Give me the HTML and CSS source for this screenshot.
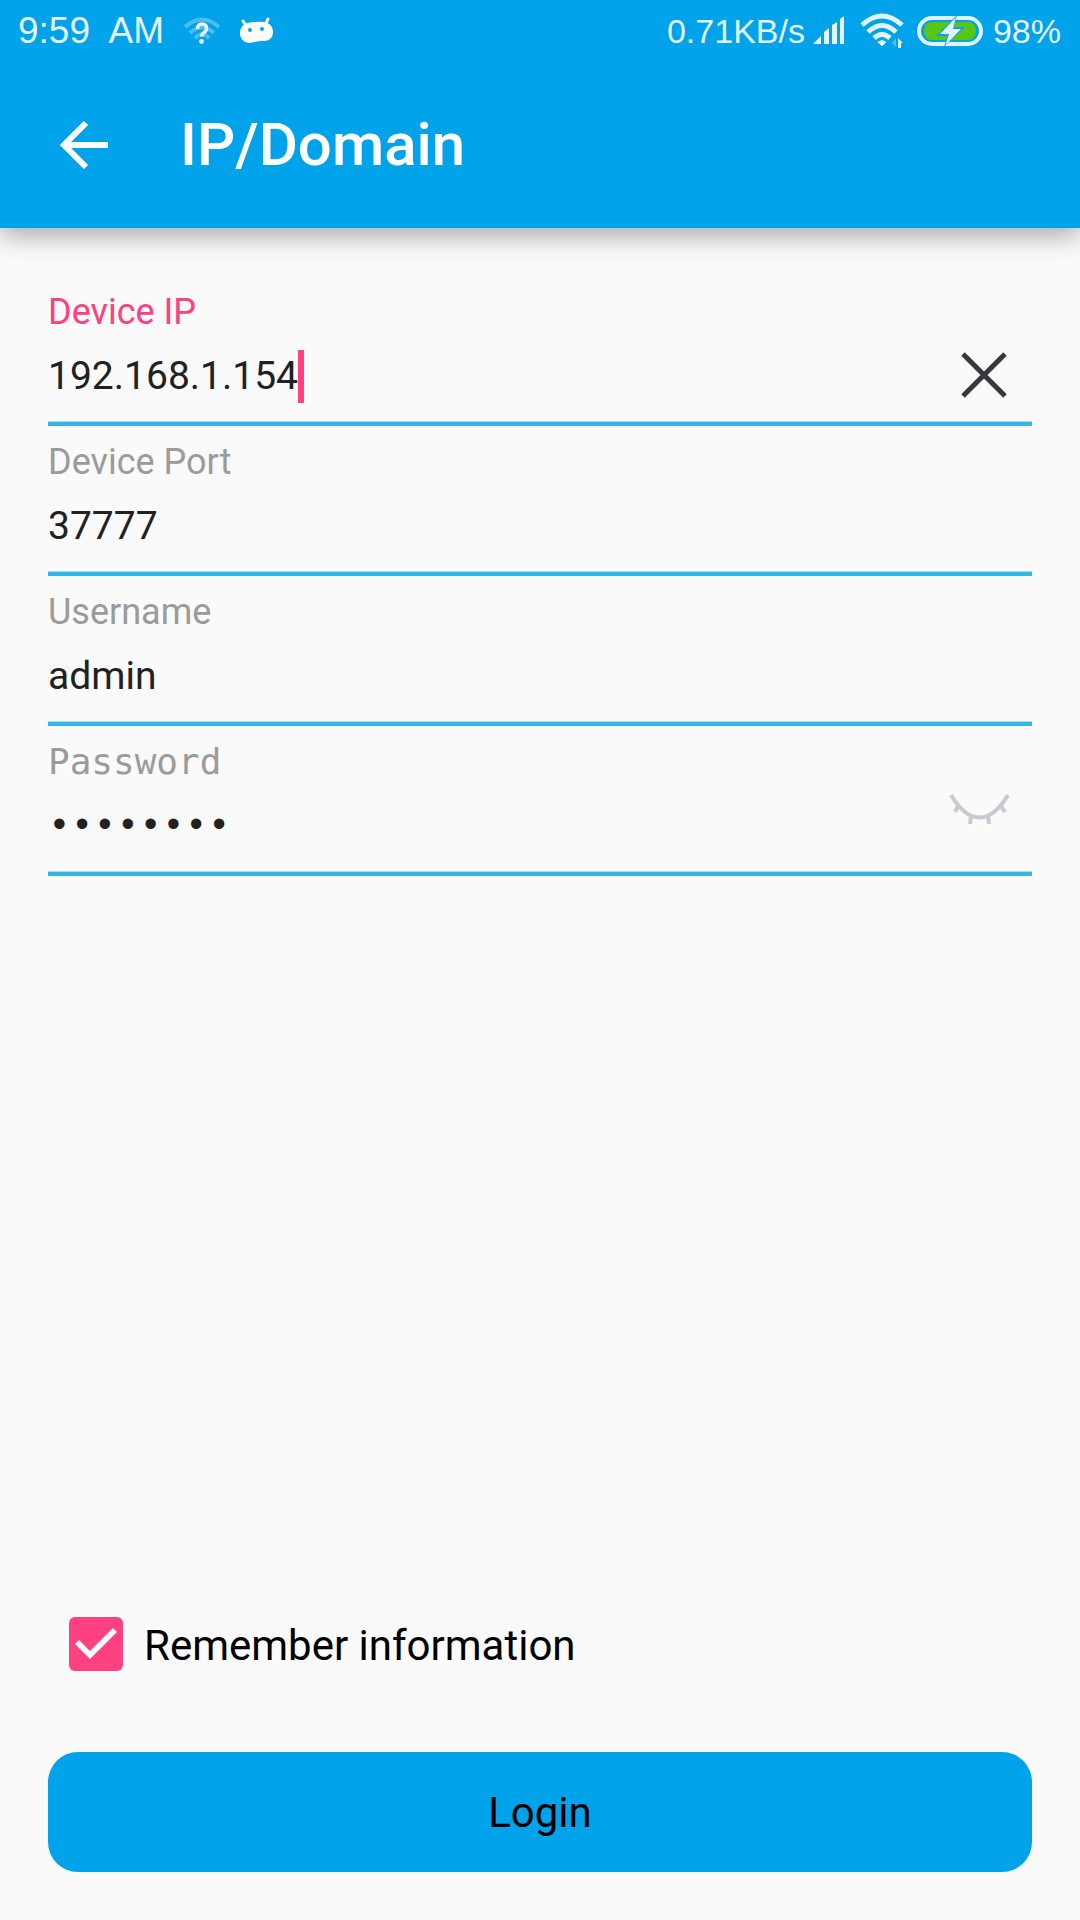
FILE: index.html
```html
<!DOCTYPE html>
<html lang="en">
<head>
<meta charset="utf-8">
<meta name="viewport" content="width=device-width, initial-scale=1">
<title>IP/Domain</title>
<link rel="stylesheet" href="styles.css">
</head>
<body>
<header class="header">
  <div class="status">
    <div class="status-left">
      <span class="clock">9:59&nbsp; AM</span>
      <svg class="wifi-unknown" width="36" height="30" viewBox="0 0 36 30" aria-hidden="true">
        <g fill="none" stroke="#4dbdf0" stroke-width="4">
          <path d="M1 11Q18 -4 35 11"/><path d="M6 17Q18 6 30 17"/><path d="M11 22Q18 15 25 22"/>
        </g>
        <path d="M13.500 13Q13.500 8 18 8T22.500 12.500Q22.500 15 20 16.500T18 20.500" fill="none" stroke="#eaf7fe" stroke-width="3.500"/>
        <circle cx="17.500" cy="25.500" r="2.400" fill="#eaf7fe"/>
      </svg>
      <svg class="robot" width="36" height="30" viewBox="0 0 36 30" aria-hidden="true">
        <path d="M4 5l4 6M29 3l-3 6" stroke="#fff" stroke-width="3" stroke-linecap="round"/>
        <path d="M1 17C1 8 9 6 17 6C26 5 34 7 34 16C34 22 30 25 25 25C20 25 16 26 11 27C5 27 1 23 1 17Z" fill="#fff"/>
        <circle cx="11" cy="14" r="2" fill="#00a2e9"/><circle cx="23" cy="13" r="2" fill="#00a2e9"/>
      </svg>
    </div>
    <div class="status-right">
      <span class="rate">0.71KB/s</span>
      <svg class="signal" width="32" height="30" viewBox="0 0 32 30" aria-hidden="true">
        <path d="M0 28L8 20V28ZM11 28V16L16 12V28ZM19 28V9L24 6V28ZM27 28V3L31 0V28Z" fill="#e2f4fd"/>
      </svg>
      <svg class="wifi" width="44" height="36" viewBox="0 0 44 36" aria-hidden="true">
        <g fill="none" stroke="#e2f4fd" stroke-width="5">
          <path d="M2 12Q22 -6 42 12"/><path d="M8 19Q22 6 36 19"/><path d="M14 25Q22 18 30 25"/>
        </g>
        <path d="M18 29Q22 26 26 29L22 33Z" fill="#e2f4fd" stroke="#e2f4fd"/>
        <path d="M36 25V34L32 30" fill="#4fbdf0"/><path d="M38 35V25L43 30H41V35Z" fill="#e2f4fd"/>
      </svg>
      <svg class="battery" width="66" height="32" viewBox="0 0 66 32" aria-hidden="true">
        <rect x="2" y="3" width="62" height="26" rx="13" fill="none" stroke="#e2f4fd" stroke-width="4"/>
        <rect x="7" y="7" width="52" height="18" rx="8" fill="#58c614"/>
        <path d="M40 0L19 21H30L27 32L48 12H37Z" fill="#00a2e9"/>
        <path d="M39 2L23 19H32L28 31L44 14H36Z" fill="#e2f4fd"/>
      </svg>
      <span class="charge">98%</span>
    </div>
  </div>
  <div class="toolbar">
    <button class="back" type="button" aria-label="Back">
      <svg width="48" height="48" viewBox="0 0 48 48" aria-hidden="true"><path d="M26 2L4 24L26 46M4 24H48" fill="none" stroke="#fff" stroke-width="6"/></svg>
    </button>
    <h1 class="title">IP/Domain</h1>
  </div>
</header>
<form class="form">
  <div class="field">
    <label class="label label-active" for="ip">Device IP</label>
    <div class="row">
      <input class="input input-fit" id="ip" type="text" value="192.168.1.154"><span class="caret"></span>
      <button class="icon-button" type="button" aria-label="Clear">
        <svg width="96" height="86" viewBox="0 0 96 86" aria-hidden="true"><path d="M27 21L69 63M69 21L27 63" stroke="#36393b" stroke-width="5"/></svg>
      </button>
    </div>
  </div>
  <div class="field">
    <label class="label" for="port">Device Port</label>
    <div class="row"><input class="input" id="port" type="text" value="37777"></div>
  </div>
  <div class="field">
    <label class="label" for="user">Username</label>
    <div class="row"><input class="input" id="user" type="text" value="admin"></div>
  </div>
  <div class="field">
    <label class="label label-mono" for="pass">Password</label>
    <div class="row">
      <input class="input input-mono" id="pass" type="password" value="password">
      <button class="icon-button" type="button" aria-label="Show password">
        <svg width="96" height="86" viewBox="0 0 96 86" aria-hidden="true"><path d="M15 12C33 42 54 42 72 12M22 23L19 29M35 33L34 41M52 33L53 41M65 23L69 29" fill="none" stroke="#c9c9d1" stroke-width="4"/></svg>
      </button>
    </div>
  </div>
  <div class="footer">
    <label class="remember"><input class="check" type="checkbox" checked><span>Remember information</span></label>
    <button class="login" type="submit">Login</button>
  </div>
</form>
</body>
</html>
```

FILE: styles.css
```css
* { box-sizing: border-box; }

body {
  margin: 0;
  min-height: 100vh;
  display: flex;
  flex-direction: column;
  background: #fafafa;
  font-family: Roboto, sans-serif;
}

svg { display: block; flex: none; }

button {
  padding: 0;
  border: 0;
  background: none;
  font: inherit;
}

.header {
  background: #00a2e9;
  color: #fff;
  box-shadow: 0 8px 24px rgba(0, 0, 0, 0.32);
}

.status {
  display: flex;
  justify-content: space-between;
  height: 62px;
  padding: 0 19px 0 18px;
  color: #e2f4fd;
  font-family: "Liberation Sans", sans-serif;
}

.status-left,
.status-right {
  display: flex;
  align-items: center;
}

.clock { font-size: 37px; line-height: 40px; }
.rate, .charge { font-size: 34px; line-height: 40px; }
.wifi-unknown { margin-left: 20px; }
.robot { margin-left: 19px; }
.signal { margin-left: 8px; }
.wifi { margin-left: 15px; }
.battery { margin: 0 10px 0 13px; }

.toolbar {
  display: flex;
  align-items: center;
  gap: 72px;
  height: 166px;
  padding: 0 60px;
}

.title {
  margin: 0;
  font-size: 60px;
  line-height: 72px;
  font-weight: 500;
}

.form {
  flex: 1;
  display: flex;
  flex-direction: column;
  padding: 48px;
}

.field { padding-top: 15px; }

.label {
  display: block;
  font-size: 36px;
  line-height: 42px;
  color: #9b9b9b;
}

.label-active { color: #ff4081; }
.label-mono { font-family: "DejaVu Sans Mono", monospace; }

.row {
  display: flex;
  align-items: center;
  height: 93px;
  padding-bottom: 3px;
  border-bottom: 4px solid #35b5e6;
  box-shadow: inset 0 -1px #a0dcf3;
}

.input {
  flex: 1;
  min-width: 0;
  height: 86px;
  padding: 0;
  border: 0;
  outline: 0;
  background: none;
  color: #212121;
  font-family: inherit;
  font-size: 39px;
}

.input-fit {
  flex: none;
  field-sizing: content;
}

.input-mono {
  font-family: "Liberation Mono", monospace;
  font-size: 38px;
}

.caret {
  width: 6px;
  height: 53px;
  background: #ff4081;
}

.icon-button { margin-left: auto; }

.footer {
  display: flex;
  flex-direction: column;
  gap: 77px;
  margin-top: auto;
}

.remember {
  display: flex;
  align-items: flex-start;
  align-self: flex-start;
  gap: 21px;
  padding-left: 21px;
  font-size: 42px;
  line-height: 58px;
  color: #000;
}

.check {
  appearance: none;
  width: 54px;
  height: 54px;
  margin: 0;
  border-radius: 6px;
  background: #ff4081;
}

.check:checked::before {
  content: "";
  display: block;
  width: 54px;
  height: 54px;
  background: #fafafa;
  clip-path: polygon(6px 27px, 10px 23px, 21px 34px, 44px 11px, 48px 15px, 21px 42px);
}

.login {
  height: 120px;
  border-radius: 30px;
  background: #00a2e9;
  color: #000;
  font-size: 42px;
}
```
